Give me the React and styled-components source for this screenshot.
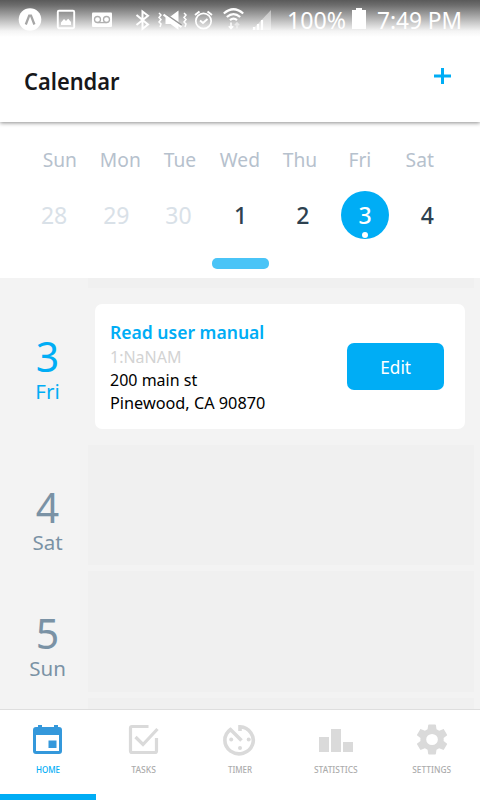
import React from "react";
import styled, { createGlobalStyle } from "styled-components";

const blue = "#00adf5";

const GlobalStyle = createGlobalStyle`
  * { box-sizing: border-box; }
  body { margin: 0; background: #fff; font-family: "Noto Sans", "Open Sans", sans-serif; }
`;

const Screen = styled.main`
  width: 480px;
  height: 800px;
  display: flex;
  flex-direction: column;
  overflow: hidden;
  background: #fff;
`;

const Header = styled.header`
  flex: none;
  height: 122px;
  background: #fff;
  box-shadow: 0 1px 4px rgba(0, 0, 0, 0.45);
  z-index: 1;
`;

const StatusBar = styled.div`
  height: 38px;
  display: flex;
  background: linear-gradient(#5a5a5a 0, #6c6c6c 5px, #9b9b9b 14px, #cbcbcb 23px, #f4f4f4 31px, #fff 37px);
`;

const TitleBar = styled.div`
  height: 84px;
  display: flex;
  justify-content: space-between;
  padding: 0 29px 0 24px;
`;

const Label = styled.span`
  display: block;
  white-space: nowrap;
  font-size: ${(p) => p.$size}px;
  line-height: ${(p) => p.$line}px;
  font-weight: ${(p) => p.$weight || 400};
  color: ${(p) => p.$color || "inherit"};
  transform: scaleX(${(p) => p.$stretch || 1});
  transform-origin: ${(p) => p.$origin || "left"} center;
`;

const Title = styled.h1`
  margin: 27px 0 0;
`;

const AddButton = styled.button`
  width: 17px;
  height: 16px;
  margin: 30px 0 0;
  padding: 0;
  border: 0;
  background: none;
  svg { display: block; }
`;

const Week = styled.section`
  flex: none;
  height: 156px;
  background: #fff;
  display: flex;
  flex-direction: column;
`;

const Weekdays = styled.div`
  display: grid;
  grid-template-columns: repeat(7, 60px);
  margin: 24px 0 0 30px;
  height: 28px;
  justify-items: center;
`;

const Dates = styled.div`
  display: grid;
  grid-template-columns: repeat(7, 62.2px);
  margin: 17px 0 0 23px;
  height: 48px;
  justify-items: center;
`;

const DateCell = styled.div`
  position: relative;
  width: 48px;
  height: 48px;
  border-radius: 50%;
  display: flex;
  justify-content: center;
  background: ${(p) => (p.$selected ? blue : "transparent")};
`;

const Dot = styled.i`
  position: absolute;
  left: 21px;
  bottom: 1px;
  width: 6px;
  height: 6px;
  border-radius: 50%;
  background: #fff;
`;

const Knob = styled.div`
  width: 57px;
  height: 11px;
  margin: 19px 0 0 212px;
  border-radius: 5px;
  background: #4ac4f7;
`;

const Agenda = styled.section`
  flex: none;
  height: 432px;
  padding-right: 6px;
  background: #f3f3f3;
  display: flex;
  flex-direction: column;
  overflow: hidden;
`;

const AgendaRow = styled.div`
  flex: none;
  display: flex;
  height: ${(p) => p.$height}px;
  margin-bottom: ${(p) => p.$gap}px;
`;

const DayColumn = styled.div`
  width: 88px;
  padding: ${(p) => p.$top || 0}px 0 0 7px;
  display: flex;
  flex-direction: column;
  align-items: center;
  color: ${(p) => (p.$today ? blue : "#7a92a5")};
`;

const Slot = styled.div`
  flex: 1;
  background: #f0f0f0;
`;

const Card = styled.article`
  flex: 1;
  margin: 0 9px 0 7px;
  padding: 16px 21px 0 15px;
  border-radius: 7px;
  background: #fff;
  display: flex;
  justify-content: space-between;
`;

const Details = styled.div`
  width: 180px;
`;

const CardTitle = styled.div`
  height: 25px;
`;

const EditButton = styled.button`
  width: 97px;
  height: 47px;
  margin-top: 23px;
  padding: 0;
  border: 0;
  border-radius: 7px;
  background: ${blue};
  color: #fff;
  font-family: inherit;
  display: flex;
  align-items: center;
  justify-content: center;
`;

const TabBar = styled.nav`
  flex: none;
  height: 91px;
  margin-top: -1px;
  border-top: 1px solid #dedede;
  background: #fff;
  display: grid;
  grid-template-columns: repeat(5, 96px);
`;

const Tab = styled.a`
  display: flex;
  flex-direction: column;
  align-items: center;
  gap: 6px;
  padding-top: 12px;
  color: ${(p) => (p.$active ? blue : "#acacac")};
  border-bottom: 6px solid ${(p) => (p.$active ? blue : "transparent")};
  svg { display: block; flex: none; }
`;

const StatusIcons = () => (
  <svg width="480" height="38" viewBox="0 0 480 38" fill="none" stroke="#fff" strokeWidth="1.7">
    <circle cx="30" cy="19.5" r="11.3" fill="#fff" stroke="none" />
    <path d="M25.800 24.500 29.200 15.700h1.800l3.400 8.800" stroke="#a6a6a6" strokeWidth="2.300" />
    <rect x="57.800" y="10.800" width="16.400" height="17.400" rx="1.200" strokeWidth="1.900" />
    <path d="M61 25v-2.500l3-3.500 2 2 2.200-2.300 2.800 3.300v3z" fill="#fff" stroke="none" />
    <rect x="92" y="12.500" width="20" height="14.500" rx="1" fill="#fff" stroke="none" />
    <g stroke="#b0b0b0" strokeWidth="1.300"><circle cx="97.500" cy="19.500" r="3" /><circle cx="106.500" cy="19.500" r="3" /><path d="M97.500 22.600h9" /></g>
    <path d="m136.500 15 11.500 9.500-5.500 4.500V11.500l5.500 4.200-11.500 9.300" strokeWidth="2" />
    <path d="m159 13 2 2-2 2.500 2 2-2 2.500 2 2-1 3M184 13l2 2-2 2.500 2 2-2 2.500 2 2-1 3" strokeWidth="1.500" />
    <path d="M165.500 16.500h5l8-6V30l-8-6h-5z" fill="#fff" stroke="none" />
    <path d="m163.500 12.700 18 12.500" stroke="#979797" strokeWidth="2" />
    <path d="m163.500 14.700 18 12.500" strokeWidth="2.200" />
    <circle cx="203.500" cy="21" r="7.700" />
    <path d="m200 20.500 3 2.500 4.500-4M195 15l4.500-3.500M212 15l-4.500-3.500" strokeWidth="1.900" />
    <path d="M223.800 13.500q9.700-8.500 19.400 0M226.800 17q6.700-5.800 13.400 0M230 20.200q3.500-3 7 0" strokeWidth="2.200" />
    <path d="M231 22.500v6M228.800 26.300l2.200 2.400 2.200-2.400" strokeWidth="1.500" />
    <path d="M237 28.500v-5.500M234.800 25.200l2.200-2.400 2.200 2.400" strokeOpacity=".5" strokeWidth="1.500" />
    <path d="M271 10v20h-19z" fill="#fff" fillOpacity=".45" stroke="none" />
    <path d="M254 30v-3M258 30v-6M262 30V20" strokeWidth="2.200" />
    <path d="M352 10h4V8h6v2h4v19h-14z" fill="#fff" stroke="none" />
    <g fill="#fff" stroke="none" fontFamily="Noto Sans" fontSize="23">
      <text x="287" y="29" textLength="59" lengthAdjust="spacingAndGlyphs">100%</text>
      <text x="377" y="29" textLength="85" lengthAdjust="spacingAndGlyphs">7:49 PM</text>
    </g>
  </svg>
);

const HomeIcon = () => (
  <svg width="48" height="36" viewBox="0 0 48 36">
    <path fill="#3498db" fillRule="evenodd" d="M14 3h4v2h12V3h4v2h1q3 0 3 3v21q0 3-3 3H12q-3 0-3-3V8q0-3 3-3h2zM12 13v16h23V13zM24.500 18.500h8v7.500h-8z" />
  </svg>
);

const TasksIcon = () => (
  <svg width="48" height="36" viewBox="0 0 48 36" fill="none" stroke="#dadada" strokeWidth="3.200">
    <path d="M28.500 4.500H12q-1.500 0-1.500 1.500v23q0 1.500 1.500 1.500h23q1.500 0 1.500-1.500V16" />
    <path d="m15.500 15 7.500 7.500L37.500 7" />
  </svg>
);

const TimerIcon = () => (
  <svg width="48" height="36" viewBox="0 0 48 36" fill="none" stroke="#dadada" strokeWidth="3.600">
    <path d="M24 9V4.800A14.200 13.500 0 1 1 14.500 7.500L25.500 18.500" />
    <g fill="#dadada" stroke="none"><circle cx="15.200" cy="17.500" r="2" /><circle cx="32.700" cy="17.500" r="2" /><circle cx="24" cy="26" r="2" /></g>
  </svg>
);

const StatsIcon = () => (
  <svg width="48" height="36" viewBox="0 0 48 36" fill="#dadada">
    <path d="M7 15h10v15H7zM19 7h10v23H19zM31 20h10v10H31z" />
  </svg>
);

const SettingsIcon = () => (
  <svg width="48" height="36" viewBox="0 0 48 36" fill="#dadada">
    <g transform="translate(4.600 -1.100) scale(1.620 1.550)">
      <path d="M19.140 12.940c.04-.3.060-.610.060-.940 0-.320-.020-.640-.070-.940l2.030-1.580c.180-.140.230-.410.120-.610l-1.920-3.320c-.120-.220-.370-.290-.590-.220l-2.390.960c-.5-.380-1.030-.7-1.620-.940L14.400 2.810c-.04-.240-.240-.410-.480-.410h-3.840c-.240 0-.430.170-.470.410l-.360 2.540c-.590.240-1.130.570-1.620.940l-2.390-.960c-.220-.080-.470 0-.590.220L2.740 8.870c-.120.210-.080.470.120.610l2.030 1.580c-.050.3-.090.630-.090.940s.020.640.070.940l-2.030 1.580c-.180.140-.230.410-.120.610l1.920 3.320c.120.220.370.290.590.220l2.390-.960c.5.380 1.030.7 1.620.940l.360 2.540c.050.240.240.410.480.410h3.840c.240 0 .440-.170.470-.410l.360-2.540c.590-.240 1.130-.560 1.620-.940l2.390.960c.220.080.470 0 .590-.220l1.920-3.320c.120-.220.070-.470-.120-.610zM12 15.600a3.600 3.600 0 1 1 0-7.200 3.600 3.600 0 0 1 0 7.200z" />
    </g>
  </svg>
);

const tabs = [
  ["HOME", HomeIcon, 1],
  ["TASKS", TasksIcon, 1.07],
  ["TIMER", TimerIcon, 1],
  ["STATISTICS", StatsIcon, 1.05],
  ["SETTINGS", SettingsIcon, 1.04],
];

const weekdays = ["Sun", "Mon", "Tue", "Wed", "Thu", "Fri", "Sat"];
const dates = [28, 29, 30, 1, 2, 3, 4];

const dateColor = (n) => (n > 7 ? "#d9e1e8" : n === 3 ? "#fff" : "#2d4150");

const Day = ({ number, name, top, today }) => (
  <DayColumn $top={top} $today={today}>
    <Label $size={41} $line={46} $origin="center">{number}</Label>
    <Label $size={20.5} $line={24} $origin="center">{name}</Label>
  </DayColumn>
);

export default function App() {
  return (
    <>
      <GlobalStyle />
      <Screen>
        <Header>
          <StatusBar><StatusIcons /></StatusBar>
          <TitleBar>
            <Title><Label $size={24} $line={32} $weight={600} $color="#17171a" $stretch={0.91}>Calendar</Label></Title>
            <AddButton aria-label="Add">
              <svg width="17" height="16" viewBox="0 0 17 16"><path d="M7 0h3v6.500h7v3h-7V16H7V9.500H0v-3h7z" fill={blue} /></svg>
            </AddButton>
          </TitleBar>
        </Header>
        <Week>
          <Weekdays>
            {weekdays.map((d) => <Label key={d} $size={20} $line={28} $color="#b6c1cd" $stretch={0.96} $origin="center">{d}</Label>)}
          </Weekdays>
          <Dates>
            {dates.map((n) => (
              <DateCell key={n} $selected={n === 3}>
                <Label $size={23} $line={48} $weight={n > 7 ? 400 : 500} $color={dateColor(n)} $origin="center">{n}</Label>
                {n === 3 && <Dot />}
              </DateCell>
            ))}
          </Dates>
          <Knob />
        </Week>
        <Agenda>
          <AgendaRow $height={10} $gap={16}><DayColumn /><Slot /></AgendaRow>
          <AgendaRow $height={125} $gap={16}>
            <Day number={3} name="Fri" top={29} today />
            <Card>
              <Details>
                <CardTitle><Label $size={18.5} $line={24} $weight={600} $color={blue} $stretch={0.948}>Read user manual</Label></CardTitle>
                <Label $size={16.5} $line={23} $color="#d3d3d3" $stretch={0.97}>1:NaNAM</Label>
                <Label $size={16.5} $line={23} $color="#000" $stretch={0.97}>200 main st</Label>
                <Label $size={16.5} $line={23} $color="#000" $stretch={0.985}>Pinewood, CA 90870</Label>
              </Details>
              <EditButton><Label $size={17.5} $line={24} $stretch={0.98} $origin="center">Edit</Label></EditButton>
            </Card>
          </AgendaRow>
          <AgendaRow $height={120} $gap={6}><Day number={4} name="Sat" top={39} /><Slot /></AgendaRow>
          <AgendaRow $height={121} $gap={6}><Day number={5} name="Sun" top={39} /><Slot /></AgendaRow>
          <AgendaRow $height={12} $gap={0}><DayColumn /><Slot /></AgendaRow>
        </Agenda>
        <TabBar>
          {tabs.map(([name, Icon, stretch]) => (
            <Tab key={name} $active={name === "HOME"}>
              <Icon />
              <Label $size={8} $line={12} $weight={500} $stretch={stretch} $origin="center">{name}</Label>
            </Tab>
          ))}
        </TabBar>
      </Screen>
    </>
  );
}
